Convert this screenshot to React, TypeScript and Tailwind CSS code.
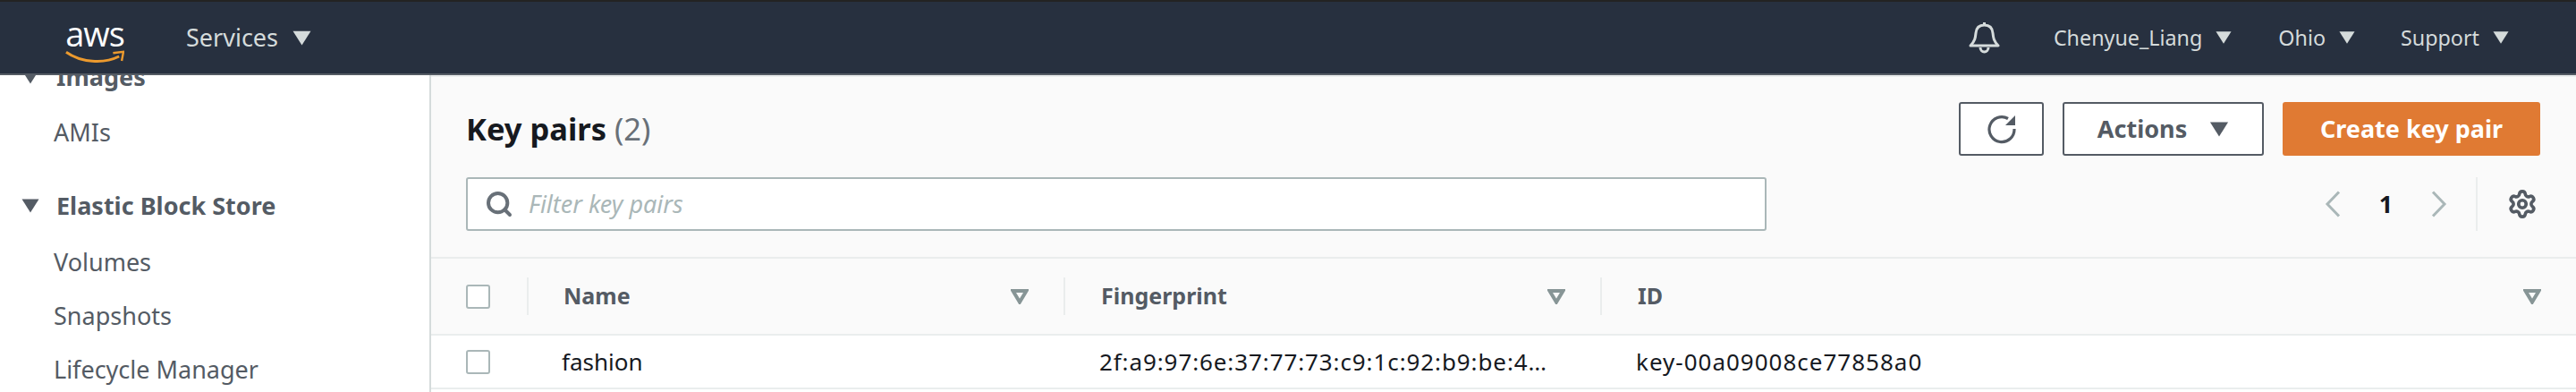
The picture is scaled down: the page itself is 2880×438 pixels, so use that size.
import { Search, Settings } from 'lucide-react'

function Caret({ className }: { className: string }) {
    return (
        <svg viewBox="0 0 20 16" className={className} aria-hidden="true">
            <path d="M0.5 0.5H19.5L10 15.5Z" fill="currentColor" />
        </svg>
    )
}

function SortIcon() {
    return (
        <svg viewBox="0 0 20 17" className="w-[20px] h-[17px] text-[#879596]" aria-hidden="true">
            <path d="M2.500 2H17.500L10 14.500Z" fill="none" stroke="currentColor" strokeWidth="4" />
        </svg>
    )
}

function Chevron({ d }: { d: string }) {
    return (
        <svg viewBox="0 0 18 30" className="w-[18px] h-[30px] shrink-0" aria-hidden="true">
            <path d={d} fill="none" stroke="currentColor" strokeWidth="3" />
        </svg>
    )
}

function Checkbox() {
    return <span className="block w-[27px] h-[27px] bg-white rounded-[3px] border-2 border-[#aab7b8]"></span>
}

function NavMenu({ label }: { label: string }) {
    return (
        <div className="flex items-center gap-[15px]">
            <span>{label}</span>
            <Caret className="w-[18px] h-[16px] text-[#d5dbdb]" />
        </div>
    )
}

function ColHead({ label, divider }: { label: string; divider?: boolean }) {
    return (
        <div className="flex items-center justify-between h-full pr-[39px]">
            <div className="flex items-center h-[42px] gap-[40px]">
                {divider && <span className="w-[2px] h-full bg-[#eaeded]"></span>}
                <span>{label}</span>
            </div>
            <SortIcon />
        </div>
    )
}

export default function App() {
    return (
        <main className="w-[2880px] h-[438px] overflow-hidden flex flex-col bg-[#fafafa] font-['Noto_Sans',sans-serif]">
            <div className="h-[2px] bg-[#232323]"></div>
            <nav className="h-[82px] shrink-0 flex items-center justify-between bg-[#27303f] border-b-[2px] border-[#545b64] pl-[73px] pr-[75px] text-[#d5dbdb] text-[23.3px]">
                <div className="flex items-center">
                    <div className="relative w-[66px] h-[62px] text-white">
                        <span className="absolute left-0 top-[6px] w-full text-center text-[38px] leading-[40px] font-['Open_Sans',sans-serif] tracking-[-1px]">aws</span>
                        <svg viewBox="0 0 68 18" className="absolute left-0 top-[45px] w-[66px] h-[18px] text-[#ec9a2e]" aria-hidden="true">
                            <path d="M1 2C18 14 44 16 62 7" fill="none" stroke="currentColor" strokeWidth="3" />
                            <path d="M55 3L67 1.500L65 12" fill="none" stroke="currentColor" strokeWidth="2.500" />
                        </svg>
                    </div>
                    <div className="flex items-center gap-[16px] ml-[69px] text-[27px]">
                        <span>Services</span>
                        <Caret className="w-[21px] h-[17px] text-[#d5dbdb]" />
                    </div>
                </div>
                <div className="flex items-center">
                    <svg viewBox="0 0 35 36" className="w-[35px] h-[36px] mr-[60px]" aria-hidden="true">
                        <path d="M2 27C7 22 7.500 18 8 13C8.500 7 12 4 17.500 4C23 4 26.500 7 27 13C27.500 18 28 22 33 27Z" fill="none" stroke="currentColor" strokeWidth="3" strokeLinejoin="round" />
                        <path d="M17.500 1V4" stroke="currentColor" strokeWidth="3" />
                        <path d="M13 27.500A4.500 5 0 0 0 22 27.500" fill="none" stroke="currentColor" strokeWidth="3" transform="translate(0 1.500)" />
                    </svg>
                    <NavMenu label="Chenyue_Liang" />
                    <div className="w-[52px]"></div>
                    <NavMenu label="Ohio" />
                    <div className="w-[51px]"></div>
                    <NavMenu label="Support" />
                </div>
            </nav>
            <div className="flex flex-1 min-h-0">
                <aside className="w-[482px] shrink-0 bg-white border-r-2 border-[#d5dbdb] overflow-hidden text-[#545b64] text-[27px]">
                    <div className="-mt-[22px]">
                        <div className="flex items-center h-[48px] pl-[24px] gap-[19px] font-bold">
                            <Caret className="w-[20px] h-[16px] text-[#545b64]" />
                            <span>Images</span>
                        </div>
                        <div className="flex items-center h-[60px] pl-[60px] mt-[8px]">AMIs</div>
                        <div className="flex items-center h-[60px] pl-[24px] gap-[19px] font-bold mt-[22px]">
                            <Caret className="w-[20px] h-[16px] text-[#545b64]" />
                            <span>Elastic Block Store</span>
                        </div>
                        <div className="flex items-center h-[60px] pl-[60px] mt-[3px]">Volumes</div>
                        <div className="flex items-center h-[60px] pl-[60px]">Snapshots</div>
                        <div className="flex items-center h-[60px] pl-[60px]">Lifecycle Manager</div>
                    </div>
                </aside>
                <section className="flex-1 min-w-0">
                    <header className="h-[205px] pl-[39px] pr-[40px] pt-[28px] border-t-2 border-b-2 border-t-[#eaeded] border-b-[#eaeded]">
                        <div className="flex items-center justify-between h-[60px]">
                            <h1 className="text-[34.5px] font-bold text-[#16191f]">
                                Key pairs <span className="font-normal text-[#687078]">(2)</span>
                            </h1>
                            <div className="flex gap-[21px] h-full">
                                <button className="w-[95px] flex items-center justify-center bg-white rounded-[3px] border-2 border-[#545b64] text-[#545b64]">
                                    <svg viewBox="0 0 34 34" className="w-[34px] h-[34px]" aria-hidden="true">
                                        <path d="M24 5.500A14 14 0 1 0 31 17" fill="none" stroke="currentColor" strokeWidth="3.200" />
                                        <path d="M32 2V13H21Z" fill="currentColor" />
                                    </svg>
                                </button>
                                <button className="w-[225px] flex items-center justify-center gap-[25px] bg-white rounded-[3px] border-2 border-[#545b64] text-[#545b64] text-[27px] font-bold">
                                    Actions
                                    <Caret className="w-[22px] h-[17px] text-[#545b64]" />
                                </button>
                                <button className="w-[288px] bg-[#e07a33] rounded-[3px] text-white text-[27px] font-bold">Create key pair</button>
                            </div>
                        </div>
                        <div className="flex items-center justify-between h-[60px] mt-[24px]">
                            <div className="w-[1454px] h-[60px] flex items-center bg-white rounded-[3px] border-2 border-[#aab7b8] pl-[19px] gap-[17px]">
                                <Search className="w-[32px] h-[32px] text-[#687078]" strokeWidth={3} />
                                <span className="italic text-[27px] text-[#aab7b8]">Filter key pairs</span>
                            </div>
                            <div className="flex items-center h-full pr-[3px] text-[#aab7b8]">
                                <Chevron d="M16 1.500L3 15L16 28.500" />
                                <span className="w-[101px] text-center text-[27px] font-bold text-[#16191f]">1</span>
                                <Chevron d="M2 1.500L15 15L2 28.500" />
                                <span className="w-[2px] h-full bg-[#eaeded] ml-[32px] mr-[33px]"></span>
                                <Settings className="w-[34px] h-[34px] text-[#545b64]" strokeWidth={2.600} />
                            </div>
                        </div>
                    </header>
                    <div className="grid grid-cols-[68px_600px_600px_1fr] h-[86px] items-center pl-[39px] border-b-2 border-[#eaeded] text-[#545b64] text-[25px] font-bold">
                        <div className="flex items-center justify-between h-[42px]">
                            <Checkbox />
                            <span className="w-[2px] h-full bg-[#eaeded] -mr-[2px]"></span>
                        </div>
                        <div className="pl-[41px] h-full"><ColHead label="Name" /></div>
                        <ColHead label="Fingerprint" divider />
                        <ColHead label="ID" divider />
                    </div>
                    <div className="grid grid-cols-[68px_600px_600px_1fr] h-[60px] items-center pl-[39px] bg-white border-b-2 border-[#eaeded] text-[#16191f] text-[26px]">
                        <Checkbox />
                        <div className="pl-[39px]">fashion</div>
                        <div className="pl-[40px] pr-[46px] truncate tracking-[0.9px]">2f:a9:97:6e:37:77:73:c9:1c:92:b9:be:4a:10:5d</div>
                        <div className="pl-[40px] tracking-[1px]">key-00a09008ce77858a0</div>
                    </div>
                    <div className="h-[10px] bg-white"></div>
                </section>
            </div>
        </main>
    )
}
